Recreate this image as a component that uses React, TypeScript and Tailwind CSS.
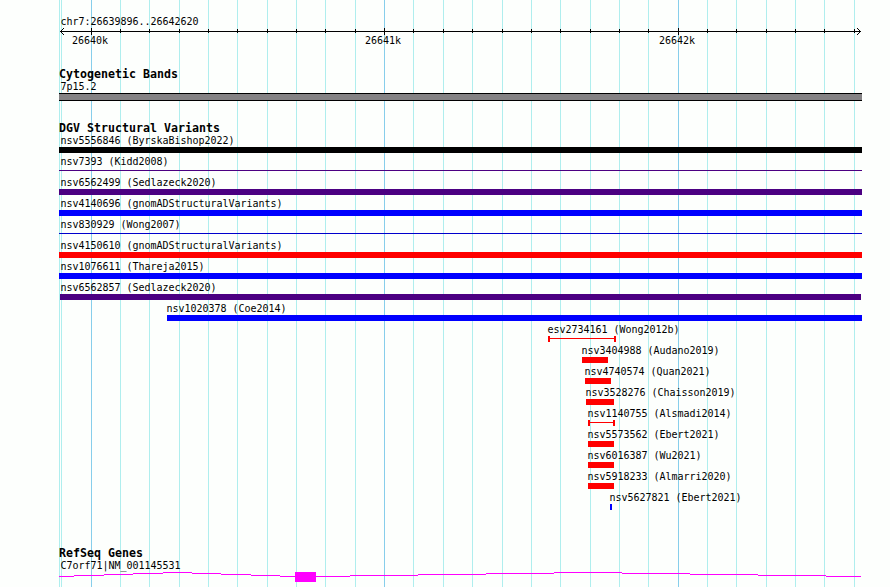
import React from "react";

const MINOR = [59, 61, 120, 149, 179, 208, 237, 267, 296, 325, 355, 413, 443, 472, 502, 531, 560, 590, 619, 648, 707, 736, 766, 795, 824, 854];
const MAJOR = [91, 384, 678];

type Variant = {
  label: string;
  start: number;
  end: number;
  color: string;
  shape?: "box" | "line" | "span";
  textX?: number;
};

const VARIANTS: Variant[] = [
  { label: "nsv5556846 (ByrskaBishop2022)", start: 59, end: 862, color: "#000000", textX: 60 },
  { label: "nsv7393 (Kidd2008)", start: 59, end: 862, color: "#4b0082", shape: "line", textX: 60 },
  { label: "nsv6562499 (Sedlazeck2020)", start: 59, end: 862, color: "#4b0082", textX: 60 },
  { label: "nsv4140696 (gnomADStructuralVariants)", start: 59, end: 862, color: "#0000ff", textX: 60 },
  { label: "nsv830929 (Wong2007)", start: 59, end: 862, color: "#0000cc", shape: "line", textX: 60 },
  { label: "nsv4150610 (gnomADStructuralVariants)", start: 59, end: 862, color: "#ff0000", textX: 60 },
  { label: "nsv1076611 (Thareja2015)", start: 59, end: 862, color: "#0000ff", textX: 60 },
  { label: "nsv6562857 (Sedlazeck2020)", start: 60, end: 861, color: "#4b0082", textX: 60 },
  { label: "nsv1020378 (Coe2014)", start: 167, end: 862, color: "#0000ff" },
  { label: "esv2734161 (Wong2012b)", start: 548, end: 616, color: "#ff0000", shape: "span" },
  { label: "nsv3404988 (Audano2019)", start: 582, end: 608, color: "#ff0000" },
  { label: "nsv4740574 (Quan2021)", start: 585, end: 611, color: "#ff0000" },
  { label: "nsv3528276 (Chaisson2019)", start: 586, end: 614, color: "#ff0000" },
  { label: "nsv1140755 (Alsmadi2014)", start: 588, end: 615, color: "#ff0000", shape: "span" },
  { label: "nsv5573562 (Ebert2021)", start: 588, end: 614, color: "#ff0000" },
  { label: "nsv6016387 (Wu2021)", start: 588, end: 614, color: "#ff0000" },
  { label: "nsv5918233 (Almarri2020)", start: 588, end: 614, color: "#ff0000" },
  { label: "nsv5627821 (Ebert2021)", start: 610, end: 612, color: "#0000ff" },
];

// Gene connector steps: [from, to, y] with y measured from the top of the glyph area.
const STEPS = [
  [59, 74, 4], [74, 104, 3], [104, 133, 2], [133, 163, 1], [163, 192, 0], [192, 221, 1], [221, 251, 2], [251, 280, 3], [280, 295, 4],
  [316, 350, 4], [350, 418, 3], [418, 486, 2], [486, 554, 1], [554, 622, 0], [622, 690, 1], [690, 758, 2], [758, 826, 3], [826, 861, 4],
];

function GridLines() {
  return (
    <svg className="absolute inset-0" width="890" height="587" shapeRendering="crispEdges">
      {MINOR.map((x) => (
        <rect key={x} x={x} y="0" width="1" height="587" fill="#afeeee" />
      ))}
      {MAJOR.map((x) => (
        <rect key={x} x={x} y="0" width="1" height="587" fill="#87ceeb" />
      ))}
    </svg>
  );
}

function Label({ x, children }: { x: number; children: React.ReactNode }) {
  return (
    <div className="h-[13px] whitespace-pre text-[10px] leading-[13px] tracking-[-0.02px]" style={{ paddingLeft: x + 0.5 }}>
      {children}
    </div>
  );
}

function Heading({ children }: { children: React.ReactNode }) {
  return <h2 className="h-[12px] whitespace-pre pl-[59px] text-[11.6px] leading-[12px] font-bold tracking-[0.015px]">{children}</h2>;
}

function Glyph({ v }: { v: Variant }) {
  const style = { marginLeft: v.start, width: v.end - v.start, color: v.color };
  if (v.shape === "line") {
    return (
      <div className="h-[6px] pt-[2px]" style={style}>
        <div className="h-px bg-current" />
      </div>
    );
  }
  if (v.shape === "span") {
    return (
      <div className="flex h-[6px]" style={style}>
        <div className="w-[2px] bg-current" />
        <div className="mt-[2px] h-px flex-1 bg-current" />
        <div className="w-[2px] bg-current" />
      </div>
    );
  }
  return <div className="h-[6px] bg-current" style={style} />;
}

function Ruler() {
  return (
    <div className="h-[35px]">
      <svg className="block" width="890" height="8" shapeRendering="crispEdges">
        <rect x="60" y="3" width="801" height="1" />
        {MINOR.filter((x) => x > 61).map((x) => (
          <rect key={x} x={x} y="1" width="1" height="4" />
        ))}
        {MAJOR.map((x) => (
          <rect key={x} x={x} y="0" width="1" height="7" />
        ))}
        {[1, 2, 3].map((d) => (
          <g key={d}>
            <rect x={60 + d} y={3 - d} width="1" height="1" />
            <rect x={60 + d} y={3 + d} width="1" height="1" />
            <rect x={860 - d} y={3 - d} width="1" height="1" />
            <rect x={860 - d} y={3 + d} width="1" height="1" />
          </g>
        ))}
      </svg>
      <div className="-mt-[2px] flex pl-[72px] text-[10px] leading-[13px] tracking-[-0.02px]">
        <span className="w-[293px]">26640k</span>
        <span className="w-[294px]">26641k</span>
        <span>26642k</span>
      </div>
    </div>
  );
}

export default function App() {
  return (
    <div className="relative h-[587px] w-[890px] overflow-hidden bg-[#fdfffd] font-['DejaVu_Sans_Mono',monospace] text-black">
      <GridLines />
      <main className="relative flex flex-col pt-[15px]">
        <Label x={60}>chr7:26639896..26642620</Label>
        <Ruler />
        <section className="mt-[5px]">
          <Heading>Cytogenetic Bands</Heading>
          <Label x={60}>7p15.2</Label>
          <div className="ml-[59px] h-[8px] w-[803px] border-y border-black bg-[#848284]" />
        </section>
        <section className="mt-[21px]">
          <Heading>DGV Structural Variants</Heading>
          {VARIANTS.map((v) => (
            <div key={v.label} className="h-[21px]">
              <Label x={v.textX ?? v.start - 1}>{v.label}</Label>
              <Glyph v={v} />
            </div>
          ))}
        </section>
        <section className="mt-[35px]">
          <Heading>RefSeq Genes</Heading>
          <Label x={60}>C7orf71|NM_001145531</Label>
          <svg className="block" width="890" height="10" fill="#ff00ff" shapeRendering="crispEdges">
            {STEPS.map(([a, b, y]) => (
              <rect key={a} x={a} y={y} width={b - a} height="1" />
            ))}
            <rect x="295" y="0" width="21" height="10" />
          </svg>
        </section>
      </main>
    </div>
  );
}
